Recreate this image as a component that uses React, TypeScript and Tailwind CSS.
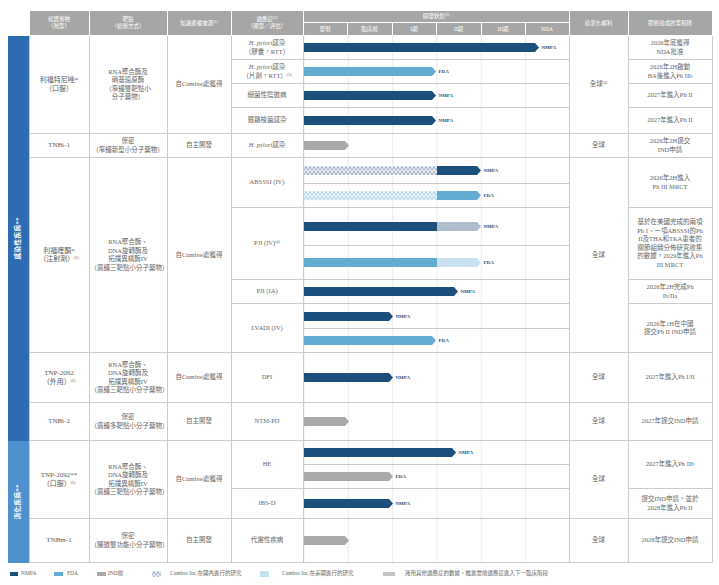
import { useId } from "react"

const NAVY = "#1d4f7c"
const LIGHT = "#62acd2"
const GRAY = "#a9a9a9"

type Seg = { w: number; fill: string }
type BarSpec = { segs: Seg[]; label?: string }

function Patterns({ id }: { id: string }) {
  return (
    <defs>
      <pattern id={`${id}cnN`} width="4" height="4.5" patternUnits="userSpaceOnUse">
        <rect width="4" height="4.5" fill="#eef1f6" />
        <path d="M0 4.5 L2 0.5 L4 4.5" stroke="#7b91ae" strokeWidth="0.7" fill="none" />
      </pattern>
      <pattern id={`${id}cnL`} width="4" height="4.5" patternUnits="userSpaceOnUse">
        <rect width="4" height="4.5" fill="#f2f8fb" />
        <path d="M0 4.5 L2 0.5 L4 4.5" stroke="#8cc3de" strokeWidth="0.7" fill="none" />
      </pattern>
      <pattern id={`${id}usN`} width="2" height="2" patternUnits="userSpaceOnUse">
        <rect width="2" height="2" fill="#c9d3e0" />
        <circle cx="1" cy="1" r="0.6" fill="#56708f" />
      </pattern>
      <pattern id={`${id}usL`} width="2" height="2" patternUnits="userSpaceOnUse">
        <rect width="2" height="2" fill="#dcedf6" />
        <circle cx="1" cy="1" r="0.6" fill="#86bedb" />
      </pattern>
    </defs>
  )
}

function Bar({ segs, label }: BarSpec) {
  const id = useId().replace(/[^a-zA-Z0-9]/g, "")
  const total = segs.reduce((s, x) => s + x.w, 0)
  const h = 9
  const fillOf = (f: string) => (f.startsWith("#") ? f : `url(#${id}${f})`)
  let x = 0
  return (
    <div className="flex items-center">
      <svg width={total} height={h} viewBox={`0 0 ${total} ${h}`} className="block shrink-0">
        <Patterns id={id} />
        {segs.map((s, i) => {
          const x0 = x
          x += s.w
          const x1 = x
          const last = i === segs.length - 1
          const d = last
            ? `M${x0} 0H${x1 - 4}L${x1} ${h / 2}L${x1 - 4} ${h}H${x0}Z`
            : `M${x0} 0H${x1}V${h}H${x0}Z`
          return <path key={i} d={d} fill={fillOf(s.fill)} />
        })}
      </svg>
      {label && (
        <span className="ml-[3px] text-[5px] font-bold leading-none text-[#1d4f7c]">{label}</span>
      )}
    </div>
  )
}

const td = "border border-[#cccccc] px-[1px] text-center align-middle text-[6.5px] leading-[8.5px] text-[#666666]"
const cand = "border border-[#cccccc] px-[1px] text-center align-middle text-[7px] leading-[8.5px] text-[#5a5a5a]"
const th = "border border-white bg-[#a6a6a6] p-0 text-center align-middle text-[5.5px] font-normal leading-[7px] text-white"
const stageTd =
  "border border-[#cccccc] p-0 align-middle bg-[linear-gradient(to_right,#ececec_1px,transparent_1px)] bg-[length:44.33px_100%]"

function Stage({ bar }: { bar: BarSpec }) {
  return (
    <td colSpan={6} className={stageTd}>
      <Bar {...bar} />
    </td>
  )
}

function Sup({ children }: { children: string }) {
  return <sup className="text-[4px]">{children}</sup>
}

function Hp() {
  return <i>H. pylori</i>
}

function SideLabel({ text }: { text: string }) {
  return (
    <div className="flex justify-center">
      <span className="rotate-180 text-[6.5px] font-bold leading-none tracking-[0.5px] text-white [text-orientation:sideways] [writing-mode:vertical-rl]">
        {text}
      </span>
    </div>
  )
}

const bars: BarSpec[] = [
  { segs: [{ w: 235, fill: NAVY }], label: "NMPA" },
  { segs: [{ w: 132, fill: LIGHT }], label: "FDA" },
  { segs: [{ w: 132, fill: NAVY }], label: "NMPA" },
  { segs: [{ w: 132, fill: NAVY }], label: "NMPA" },
  { segs: [{ w: 45, fill: GRAY }] },
  { segs: [{ w: 133, fill: "cnN" }, { w: 44, fill: NAVY }], label: "NMPA" },
  { segs: [{ w: 133, fill: "cnL" }, { w: 44, fill: LIGHT }], label: "FDA" },
  { segs: [{ w: 133, fill: NAVY }, { w: 44, fill: "usN" }], label: "NMPA" },
  { segs: [{ w: 133, fill: LIGHT }, { w: 44, fill: "usL" }], label: "FDA" },
  { segs: [{ w: 154, fill: NAVY }], label: "NMPA" },
  { segs: [{ w: 89, fill: NAVY }], label: "NMPA" },
  { segs: [{ w: 132, fill: LIGHT }], label: "FDA" },
  { segs: [{ w: 89, fill: NAVY }], label: "NMPA" },
  { segs: [{ w: 45, fill: GRAY }] },
  { segs: [{ w: 152, fill: NAVY }], label: "NMPA" },
  { segs: [{ w: 89, fill: GRAY }], label: "FDA" },
  { segs: [{ w: 89, fill: NAVY }], label: "NMPA" },
  { segs: [{ w: 45, fill: GRAY }] },
]

const stages = ["發現", "臨床前", "I期", "II期", "III期", "NDA"]

function LegendIcon({ kind }: { kind: "cnN" | "usL" }) {
  const id = useId().replace(/[^a-zA-Z0-9]/g, "")
  return (
    <svg width="9" height="6" className="block shrink-0">
      <Patterns id={id} />
      <rect width="9" height="6" fill={`url(#${id}${kind})`} />
    </svg>
  )
}

export default function App() {
  return (
    <div className="min-h-[585px] w-[719px] bg-white pt-[10px] font-['Liberation_Serif','Noto_Sans_CJK_TC',serif]">
      <table className="ml-[8px] w-[704px] table-fixed border-collapse">
        <colgroup>
          <col className="w-[21px]" />
          <col className="w-[60px]" />
          <col className="w-[78px]" />
          <col className="w-[64px]" />
          <col className="w-[72px]" />
          <col className="w-[44px]" />
          <col className="w-[45px]" />
          <col className="w-[44px]" />
          <col className="w-[45px]" />
          <col className="w-[44px]" />
          <col className="w-[44px]" />
          <col className="w-[59px]" />
          <col className="w-[84px]" />
        </colgroup>
        <thead>
          <tr className="h-[12px]">
            <td rowSpan={2} className="p-0" />
            <th rowSpan={2} className={th}>
              候選藥物
              <br />
              （劑型）
            </th>
            <th rowSpan={2} className={th}>
              靶點
              <br />
              （給藥方式）
            </th>
            <th rowSpan={2} className={th}>
              知識產權來源<Sup>(1)</Sup>
            </th>
            <th rowSpan={2} className={th}>
              適應症<Sup>(2)</Sup>
              <br />
              （類型／評估）
            </th>
            <th colSpan={6} className={th}>
              開發狀態<Sup>(3)</Sup>
            </th>
            <th rowSpan={2} className={th}>
              商業化權利
            </th>
            <th rowSpan={2} className={th}>
              即將達成的里程碑
            </th>
          </tr>
          <tr className="h-[13px]">
            {stages.map((s) => (
              <th key={s} className={th}>
                {s}
              </th>
            ))}
          </tr>
        </thead>
        <tbody>
          <tr className="h-[24px]">
            <td rowSpan={14} className="bg-[#2d6cb3] p-0 align-middle">
              <SideLabel text="感染性疾病**" />
            </td>
            <td rowSpan={4} className={cand}>
              利福特尼唑*
              <br />
              （口服）
            </td>
            <td rowSpan={4} className={td}>
              RNA聚合酶及
              <br />
              硝基還原酶
              <br />
              （窄譜雙靶點小
              <br />
              分子藥物）
            </td>
            <td rowSpan={4} className={td}>
              自Cumbre處獲得
            </td>
            <td className={td}>
              <Hp />
              感染
              <br />
              （膠囊，RTT）
            </td>
            <Stage bar={bars[0]} />
            <td rowSpan={4} className={td}>
              全球<Sup>(4)</Sup>
            </td>
            <td className={td}>
              2026年底獲得
              <br />
              NDA批准
            </td>
          </tr>
          <tr className="h-[24px]">
            <td className={td}>
              <Hp />
              感染
              <br />
              （片劑，RTT）<Sup>(3)</Sup>
            </td>
            <Stage bar={bars[1]} />
            <td className={td}>
              2026年2H啟動
              <br />
              BA後進入Ph IIb
            </td>
          </tr>
          <tr className="h-[24px]">
            <td className={td}>細菌性陰道病</td>
            <Stage bar={bars[2]} />
            <td className={td}>2027年進入Ph II</td>
          </tr>
          <tr className="h-[26px]">
            <td className={td}>艱難梭菌感染</td>
            <Stage bar={bars[3]} />
            <td className={td}>2027年進入Ph II</td>
          </tr>
          <tr className="h-[24px]">
            <td className={cand}>TNBi-1</td>
            <td className={td}>
              保密
              <br />
              <span className="whitespace-nowrap">（窄譜新型小分子藥物）</span>
            </td>
            <td className={td}>自主開發</td>
            <td className={td}>
              <Hp />
              感染
            </td>
            <Stage bar={bars[4]} />
            <td className={td}>全球</td>
            <td className={td}>
              2026年2H提交
              <br />
              IND申請
            </td>
          </tr>
          <tr className="h-[26px]">
            <td rowSpan={7} className={cand}>
              利福喹酮*
              <br />
              （注射劑）<Sup>(2)</Sup>
            </td>
            <td rowSpan={7} className={td}>
              RNA聚合酶、
              <br />
              DNA旋轉酶及
              <br />
              拓撲異構酶IV
              <br />
              <span className="whitespace-nowrap">（廣譜三靶點小分子藥物）</span>
            </td>
            <td rowSpan={7} className={td}>
              自Cumbre處獲得
            </td>
            <td rowSpan={2} className={td}>
              ABSSSI (IV)
            </td>
            <Stage bar={bars[5]} />
            <td rowSpan={7} className={td}>
              全球
            </td>
            <td rowSpan={2} className={td}>
              2026年2H進入
              <br />
              Ph III MRCT
            </td>
          </tr>
          <tr className="h-[24px]">
            <Stage bar={bars[6]} />
          </tr>
          <tr className="h-[38px]">
            <td rowSpan={2} className={td}>
              PJI (IV)<Sup>(4)</Sup>
            </td>
            <Stage bar={bars[7]} />
            <td rowSpan={2} className={td}>
              基於在美國完成的兩項
              <br />
              Ph I、一項ABSSSI的Ph
              <br />
              II及THA和TKA患者的
              <br />
              關節組織分佈研究收集
              <br />
              的數據，2029年進入Ph
              <br />
              III MRCT
            </td>
          </tr>
          <tr className="h-[34px]">
            <Stage bar={bars[8]} />
          </tr>
          <tr className="h-[24px]">
            <td className={td}>PJI (IA)</td>
            <Stage bar={bars[9]} />
            <td className={td}>
              2026年2H完成Ph
              <br />
              Ib/IIa
            </td>
          </tr>
          <tr className="h-[25px]">
            <td rowSpan={2} className={td}>
              LVADI (IV)
            </td>
            <Stage bar={bars[10]} />
            <td rowSpan={2} className={td}>
              2026年1H在中國
              <br />
              提交Ph II IND申請
            </td>
          </tr>
          <tr className="h-[24px]">
            <Stage bar={bars[11]} />
          </tr>
          <tr className="h-[50px]">
            <td className={cand}>
              TNP-2092
              <br />
              （外用）<Sup>(2)</Sup>
            </td>
            <td className={td}>
              RNA聚合酶、
              <br />
              DNA旋轉酶及
              <br />
              拓撲異構酶IV
              <br />
              <span className="whitespace-nowrap">（廣譜三靶點小分子藥物）</span>
            </td>
            <td className={td}>自Cumbre處獲得</td>
            <td className={td}>DFI</td>
            <Stage bar={bars[12]} />
            <td className={td}>全球</td>
            <td className={td}>2027年進入Ph I/II</td>
          </tr>
          <tr className="h-[38px]">
            <td className={cand}>TNBi-2</td>
            <td className={td}>
              保密
              <br />
              <span className="whitespace-nowrap">（廣譜多靶點小分子藥物）</span>
            </td>
            <td className={td}>自主開發</td>
            <td className={td}>NTM-PD</td>
            <Stage bar={bars[13]} />
            <td className={td}>全球</td>
            <td className={td}>2027年提交IND申請</td>
          </tr>
          <tr className="h-[24px]">
            <td rowSpan={4} className="bg-[#4f90cf] p-0 align-middle">
              <SideLabel text="消化疾病**" />
            </td>
            <td rowSpan={3} className={cand}>
              TNP-2092**
              <br />
              （口服）<Sup>(5)</Sup>
            </td>
            <td rowSpan={3} className={td}>
              RNA聚合酶、
              <br />
              DNA旋轉酶及
              <br />
              拓撲異構酶IV
              <br />
              <span className="whitespace-nowrap">（廣譜三靶點小分子藥物）</span>
            </td>
            <td rowSpan={3} className={td}>
              自Cumbre處獲得
            </td>
            <td rowSpan={2} className={td}>
              HE
            </td>
            <Stage bar={bars[14]} />
            <td rowSpan={3} className={td}>
              全球
            </td>
            <td rowSpan={2} className={td}>
              2027年進入Ph IIb
            </td>
          </tr>
          <tr className="h-[24px]">
            <Stage bar={bars[15]} />
          </tr>
          <tr className="h-[30px]">
            <td className={td}>IBS-D</td>
            <Stage bar={bars[16]} />
            <td className={td}>
              提交IND申請，並於
              <br />
              2028年進入Ph II
            </td>
          </tr>
          <tr className="h-[44px]">
            <td className={cand}>TNBm-1</td>
            <td className={td}>
              保密
              <br />
              <span className="whitespace-nowrap">（腸道雙功能小分子藥物）</span>
            </td>
            <td className={td}>自主開發</td>
            <td className={td}>代謝性疾病</td>
            <Stage bar={bars[17]} />
            <td className={td}>全球</td>
            <td className={td}>2028年提交IND申請</td>
          </tr>
        </tbody>
      </table>

      <div className="mt-[7px] flex h-[8px] items-center pl-[10px] text-[5.5px] leading-none text-[#666666]">
        <div className="flex w-[44px] items-center gap-[3px]">
          <span className="h-[4px] w-[8px] bg-[#1d4f7c]" />
          NMPA
        </div>
        <div className="flex w-[43px] items-center gap-[4px]">
          <span className="h-[4px] w-[9px] bg-[#62acd2]" />
          FDA
        </div>
        <div className="flex w-[55px] items-center gap-[2px]">
          <span className="h-[4px] w-[9px] bg-[#a9a9a9]" />
          IND前
        </div>
        <div className="flex w-[108px] items-center gap-[9px]">
          <LegendIcon kind="cnN" />
          Cumbre Inc.在國內進行的研究
        </div>
        <div className="flex w-[123px] items-center gap-[13px]">
          <LegendIcon kind="usL" />
          Cumbre Inc.在美國進行的研究
        </div>
        <div className="flex items-center gap-[10px]">
          <span className="h-[4px] w-[12px] bg-[#c4c4c4]" />
          運用其他適應症的數據，推進當前適應症進入下一臨床階段
        </div>
      </div>
    </div>
  )
}
